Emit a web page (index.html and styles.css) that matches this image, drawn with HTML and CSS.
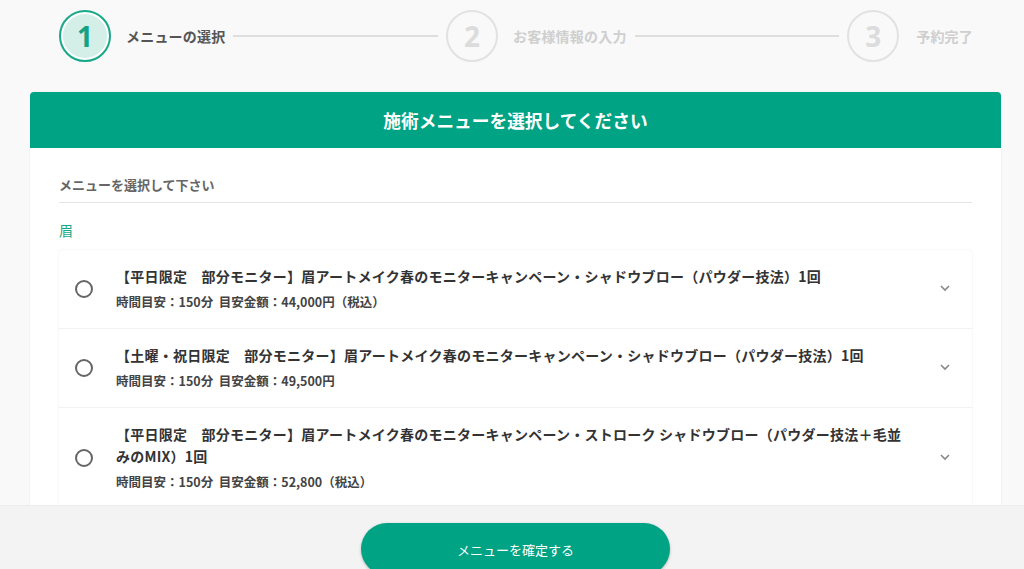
FILE: index.html
```html
<!DOCTYPE html>
<html lang="ja">
<head>
<meta charset="utf-8">
<title>メニューの選択</title>
<link rel="stylesheet" href="styles.css">
</head>
<body>
<div class="stepper">
  <div class="step-circle active">1</div>
  <div class="step-label active">メニューの選択</div>
  <div class="step-line"></div>
  <div class="step-circle">2</div>
  <div class="step-label">お客様情報の入力</div>
  <div class="step-line"></div>
  <div class="step-circle">3</div>
  <div class="step-label last">予約完了</div>
</div>

<div class="card">
  <div class="card-header">施術メニューを選択してください</div>
  <div class="card-body">
    <div class="field-label">メニューを選択して下さい</div>
    <div class="category">眉</div>
    <div class="menu-list">
      <div class="menu-item">
        <span class="radio"></span>
        <div class="menu-text">
          <div class="menu-title">【平日限定　部分モニター】眉アートメイク春のモニターキャンペーン・シャドウブロー（パウダー技法）1回</div>
          <div class="menu-sub">時間目安：150分&nbsp; 目安金額：44,000円（税込）</div>
        </div>
        <svg class="chevron" width="12" height="8" viewBox="0 0 12 8"><path d="M2 2 L6 6 L10 2" fill="none" stroke="#888" stroke-width="1.6"/></svg>
      </div>
      <div class="menu-item">
        <span class="radio"></span>
        <div class="menu-text">
          <div class="menu-title">【土曜・祝日限定　部分モニター】眉アートメイク春のモニターキャンペーン・シャドウブロー（パウダー技法）1回</div>
          <div class="menu-sub">時間目安：150分&nbsp; 目安金額：49,500円</div>
        </div>
        <svg class="chevron" width="12" height="8" viewBox="0 0 12 8"><path d="M2 2 L6 6 L10 2" fill="none" stroke="#888" stroke-width="1.6"/></svg>
      </div>
      <div class="menu-item">
        <span class="radio"></span>
        <div class="menu-text">
          <div class="menu-title">【平日限定　部分モニター】眉アートメイク春のモニターキャンペーン・ストローク シャドウブロー（パウダー技法＋毛並みのMIX）1回</div>
          <div class="menu-sub">時間目安：150分&nbsp; 目安金額：52,800（税込）</div>
        </div>
        <svg class="chevron" width="12" height="8" viewBox="0 0 12 8"><path d="M2 2 L6 6 L10 2" fill="none" stroke="#888" stroke-width="1.6"/></svg>
      </div>
    </div>
  </div>
</div>

<div class="footer">
  <button class="confirm">メニューを確定する</button>
</div>
</body>
</html>
```

FILE: styles.css
```css
* { box-sizing: border-box; }
html, body { margin: 0; padding: 0; }
body {
  background: #f9f9f9;
  font-family: "Noto Sans CJK JP", "Noto Sans", sans-serif;
  color: #333;
  overflow: hidden;
  height: 569px;
}

.stepper {
  display: flex;
  align-items: center;
  padding: 10px 51px 0 59px;
  height: 62px;
}
.step-circle {
  flex: none;
  width: 52px;
  height: 52px;
  border-radius: 50%;
  border: 2px solid #e2e2e2;
  display: flex;
  align-items: center;
  justify-content: center;
  font-family: "Noto Sans", sans-serif;
  font-weight: 700;
  font-size: 28px;
  color: #dcdcdc;
}
.step-circle.active {
  border-color: #1aa88a;
  box-shadow: inset 0 0 0 2px #fff;
  background: #d4eee8;
  color: #14a283;
}
.step-label {
  flex: none;
  margin-left: 15px;
  font-size: 14px;
  font-weight: 700;
  color: #cfcfcf;
  line-height: 20px;
  letter-spacing: 0.2px;
}
.step-label.active { color: #555; }
.step-label.last { margin-left: 17px; }
.step-line {
  flex: 1;
  height: 2px;
  background: #dedede;
  margin: 0 8px 0 8px;
}

.card {
  margin: 30px 23px 0 30px;
  background: #fff;
  border-radius: 4px 4px 0 0;
  box-shadow: 0 0 2px rgba(0,0,0,0.08);
}
.card-header {
  height: 56px;
  background: #00a384;
  color: #fff;
  border-radius: 4px 4px 0 0;
  display: flex;
  align-items: center;
  justify-content: center;
  font-size: 17.7px;
  font-weight: 700;
}
.card-body {
  padding: 27px 29px 0 29px;
}
.field-label {
  font-size: 13px;
  font-weight: 700;
  color: #666;
  line-height: 20px;
  padding-bottom: 7px;
  border-bottom: 1px solid #e4e4e4;
}
.category {
  margin-top: 17px;
  font-size: 14px;
  color: #1aa88a;
  line-height: 20px;
}
.menu-list {
  margin-top: 10px;
  background: #fff;
  box-shadow: 0 0 2px rgba(0,0,0,0.1);
  border-radius: 3px;
}
.menu-item {
  display: flex;
  align-items: center;
  padding: 15px 21px 17px 16px;
  border-bottom: 1px solid #f2f2f2;
}
.radio {
  flex: none;
  width: 18px;
  height: 18px;
  border: 2px solid #666;
  border-radius: 50%;
  margin-right: 23px;
  margin-top: 2px;
}
.menu-text { flex: 1; }
.menu-title {
  font-size: 14px;
  font-weight: 700;
  line-height: 22px;
  color: #333;
  letter-spacing: 0.25px;
  padding-right: 28px;
}
.menu-sub {
  margin-top: 6px;
  font-size: 12.5px;
  font-weight: 700;
  line-height: 18px;
  color: #444;
}
.chevron { flex: none; }

.footer {
  position: fixed;
  left: 0;
  right: 0;
  bottom: 0;
  height: 64px;
  background: #f3f3f3;
  border-top: 1px solid #ececec;
  display: flex;
  justify-content: center;
  padding: 17px 0 0 7px;
  overflow: hidden;
}
.confirm {
  width: 309px;
  height: 52px;
  border: none;
  border-radius: 26px;
  background: #00a384;
  color: #fff;
  font-family: "Noto Sans CJK JP", sans-serif;
  font-size: 13px;
  box-shadow: 0 1px 3px rgba(0,0,0,0.25);
  padding-bottom: 0;
  align-self: flex-start;
}
```
